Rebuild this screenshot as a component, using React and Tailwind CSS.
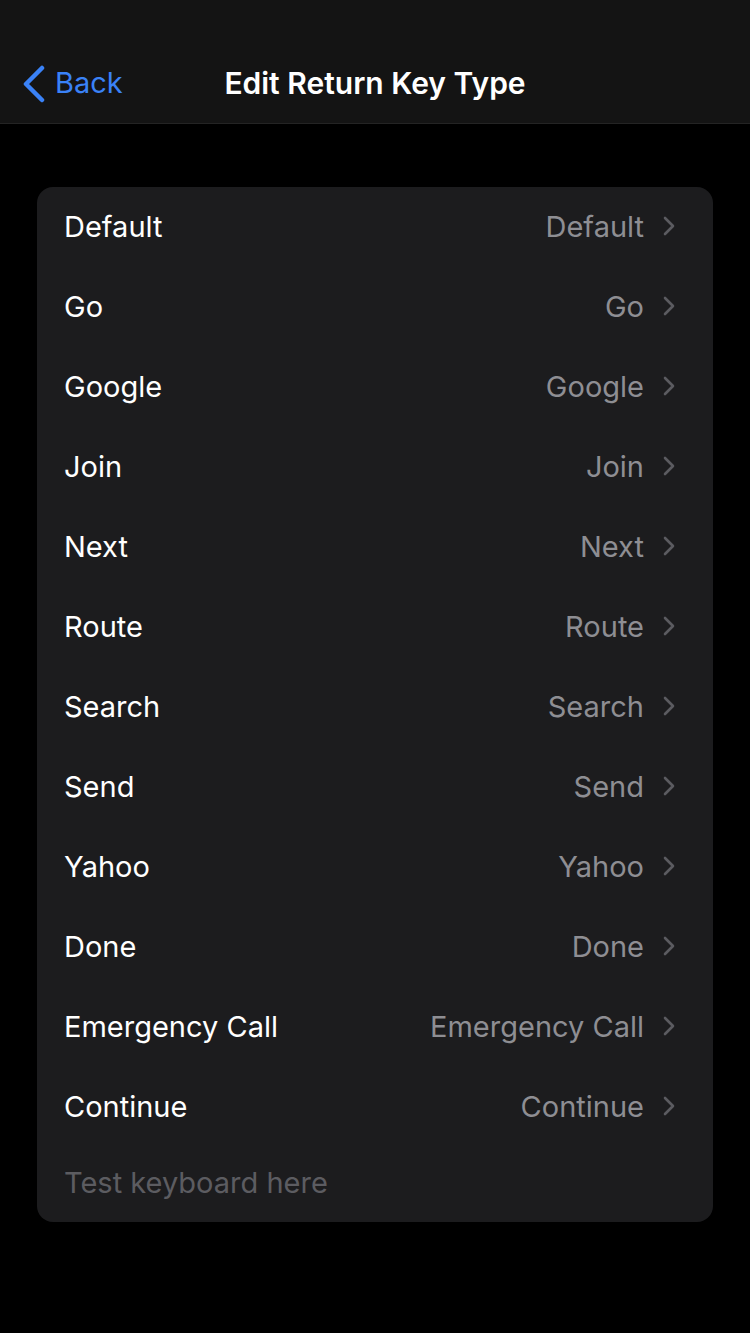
import React from "react";

const options = [
  "Default", "Go", "Google", "Join", "Next", "Route",
  "Search", "Send", "Yahoo", "Done", "Emergency Call", "Continue",
];

// ── Row ───────────────────────────────────────────────────────────────────────
const Row = ({ label }) => (
  <div className="flex items-center justify-between h-[80px] pl-[27px] pr-[38px] pb-[2px]">
    <span className="text-white">{label}</span>
    <div className="flex items-center gap-[19px]">
      <span className="text-[#8e8e93]">{label}</span>
      <svg width="12" height="20" viewBox="0 0 12 20" fill="none">
        <path d="M2 2l8 8-8 8" stroke="#5b5b60" strokeWidth="2.6" strokeLinecap="round" strokeLinejoin="round" />
      </svg>
    </div>
  </div>
);

export default function App() {
  return (
    <div
      className="w-[750px] h-[1333px] bg-black text-[29px] leading-none"
      style={{ fontFamily: "Inter, 'Noto Sans', sans-serif" }}
    >
      <header className="relative h-[124px] bg-[#141414] border-b border-[#242424] flex items-center justify-center pt-[42px]">
        <div className="absolute left-[22px] top-[65px] flex items-center gap-[9px] text-[#3a82f7]">
          <svg width="24" height="38" viewBox="0 0 24 38" fill="none">
            <path d="M20 3L4 19l16 16" stroke="#3a82f7" strokeWidth="4.5" strokeLinecap="round" strokeLinejoin="round" />
          </svg>
          <span className="text-[29px] pb-[4px]">Back</span>
        </div>
        <h1 className="text-white text-[30px] font-semibold">Edit Return Key Type</h1>
      </header>

      <div className="px-[37px] pt-[63px]">
        <div className="bg-[#1c1c1e] rounded-[16px] overflow-hidden">
          {options.map((o) => <Row key={o} label={o} />)}
          <div className="h-[75px] pl-[27px] flex items-center">
            <span className="text-[#5c5c61] pb-[5px]">Test keyboard here</span>
          </div>
        </div>
      </div>
    </div>
  );
}
